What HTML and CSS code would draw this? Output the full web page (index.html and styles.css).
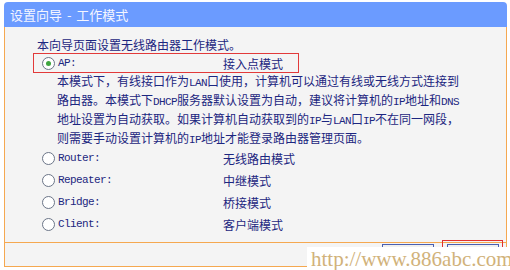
FILE: index.html
```html
<!DOCTYPE html>
<html>
<head>
<meta charset="utf-8">
<link rel="stylesheet" href="styles.css">
</head>
<body>
<div class="frame">
  <div class="header">设置向导&nbsp;-&nbsp;工作模式</div>
  <div class="main">
    <p class="intro">本向导页面设置无线路由器工作模式。</p>
    <div class="opt opt-ap">
      <span class="radio on"></span><span class="en name">AP:</span><span class="label">接入点模式</span>
    </div>
    <p class="desc">本模式下，有线接口作为<span class="en">LAN</span>口使用，计算机可以通过有线或无线方式连接到路由器。本模式下<span class="en">DHCP</span>服务器默认设置为自动，建议将计算机的<span class="en">IP</span>地址和<span class="en">DNS</span>地址设置为自动获取。如果计算机自动获取到的<span class="en">IP</span>与<span class="en">LAN</span>口<span class="en">IP</span>不在同一网段，则需要手动设置计算机的<span class="en">IP</span>地址才能登录路由器管理页面。</p>
    <div class="opt">
      <span class="radio"></span><span class="en name">Router:</span><span class="label">无线路由模式</span>
    </div>
    <div class="opt">
      <span class="radio"></span><span class="en name">Repeater:</span><span class="label">中继模式</span>
    </div>
    <div class="opt">
      <span class="radio"></span><span class="en name">Bridge:</span><span class="label">桥接模式</span>
    </div>
    <div class="opt">
      <span class="radio"></span><span class="en name">Client:</span><span class="label">客户端模式</span>
    </div>
  </div>
  <div class="footer">
    <span class="btn">上一步</span>
    <span class="btn-focus"><span class="btn">下一步</span></span>
  </div>
</div>
<div class="watermark">http://www.886abc.com</div>
</body>
</html>
```
FILE: styles.css
```css
html, body {
  margin: 0;
  padding: 0;
  background: #ffffff;
}
body {
  width: 510px;
  height: 270px;
  overflow: hidden;
  position: relative;
  font-family: "Noto Sans CJK SC", sans-serif;
  font-size: 12px;
  color: #1c2680;
}
.frame {
  margin: 2px 0 0 4px;
  width: 503px;
}
.header {
  height: 25px;
  line-height: 25px;
  background: #6b9bff;
  border-radius: 4px 4px 0 0;
  color: #f4f6ff;
  padding-left: 6px;
  font-size: 13px;
  word-spacing: 2px;
}
.main {
  height: 215px;
  box-sizing: border-box;
  background: #f4f4f4;
  border-left: 1px solid #f5a850;
  border-right: 1px solid #f5a850;
  padding: 11px 0 0 28px;
}
.intro {
  margin: 0 0 0 4px;
  line-height: 14px;
}
.en {
  font-family: "Liberation Mono", monospace;
  font-size: 11px;
  letter-spacing: -0.6px;
  line-height: 10px;
}
.opt {
  display: grid;
  grid-template-columns: 13px 162px auto;
  column-gap: 3px;
  align-items: center;
  height: 22px;
  padding-left: 9px;
}
.opt-ap {
  width: 266px;
  height: 20px;
  box-sizing: border-box;
  border: 1px solid #e23a3a;
  margin: 1px 0 0 0;
  padding-left: 8px;
}
.radio {
  width: 11px;
  height: 11px;
  border: 1px solid #6b7588;
  border-radius: 50%;
  background: #ffffff;
  display: flex;
  align-items: center;
  justify-content: center;
}
.radio.on::after {
  content: "";
  width: 5px;
  height: 5px;
  border-radius: 50%;
  background: #3fa53f;
}
.desc {
  margin: -2px 0 0 24px;
  line-height: 19px;
  width: 410px;
}
.footer {
  height: 23px;
  background: #f4f4f4;
  border: 1px solid #f5a850;
  display: flex;
  justify-content: flex-end;
  align-items: flex-start;
  gap: 8px;
  padding-right: 3px;
}
.btn {
  display: inline-block;
  width: 50px;
  height: 20px;
  margin-top: 1px;
  border: 1px solid #4a5fb0;
  background: #f0f0f0;
  text-align: center;
  line-height: 20px;
  color: #1c2680;
}
.btn-focus {
  border: 1px solid #e03030;
  margin-top: -3px;
  padding: 3px 3px 0 4px;
}
.btn-focus .btn {
  margin-top: 0;
}
.watermark {
  position: absolute;
  left: 307px;
  top: 247px;
  width: 203px;
  height: 23px;
  background: #ffffff;
  font-family: "Liberation Serif", serif;
  font-size: 21px;
  line-height: 24px;
  color: #d1b27a;
  padding-left: 4px;
  box-sizing: border-box;
}
```
